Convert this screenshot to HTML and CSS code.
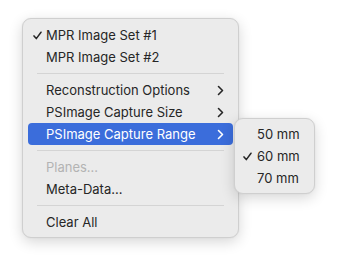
FILE: index.html
```html
<!DOCTYPE html>
<html>
<head>
<meta charset="utf-8">
<link rel="stylesheet" href="styles.css">
</head>
<body>
<div class="stage">
  <div class="menu main">
    <div class="item"><span class="check"><svg width="9" height="9" viewBox="0 0 9 9"><path d="M1 4.9 L3.3 7.6 L8 1.2" fill="none" stroke="#262626" stroke-width="1.5" stroke-linecap="round" stroke-linejoin="round"/></svg></span><span class="label">MPR Image Set #1</span></div>
    <div class="item"><span class="check"></span><span class="label">MPR Image Set #2</span></div>
    <div class="sep"></div>
    <div class="item"><span class="check"></span><span class="label">Reconstruction Options</span><span class="chev"><svg width="7" height="11" viewBox="0 0 7 11"><path d="M1.5 1.5 L5.5 5.5 L1.5 9.5" fill="none" stroke="#262626" stroke-width="1.6" stroke-linecap="round" stroke-linejoin="round"/></svg></span></div>
    <div class="item"><span class="check"></span><span class="label">PSImage Capture Size</span><span class="chev"><svg width="7" height="11" viewBox="0 0 7 11"><path d="M1.5 1.5 L5.5 5.5 L1.5 9.5" fill="none" stroke="#262626" stroke-width="1.6" stroke-linecap="round" stroke-linejoin="round"/></svg></span></div>
    <div class="item active"><span class="check"></span><span class="label">PSImage Capture Range</span><span class="chev"><svg width="7" height="11" viewBox="0 0 7 11"><path d="M1.5 1.5 L5.5 5.5 L1.5 9.5" fill="none" stroke="#ffffff" stroke-width="1.6" stroke-linecap="round" stroke-linejoin="round"/></svg></span></div>
    <div class="sep"></div>
    <div class="item disabled"><span class="check"></span><span class="label">Planes...</span></div>
    <div class="item"><span class="check"></span><span class="label">Meta-Data...</span></div>
    <div class="sep"></div>
    <div class="item"><span class="check"></span><span class="label">Clear All</span></div>
  </div>
  <div class="menu sub">
    <div class="item"><span class="check"></span><span class="label">50 mm</span></div>
    <div class="item"><span class="check"><svg width="9" height="9" viewBox="0 0 9 9"><path d="M1 4.9 L3.3 7.6 L8 1.2" fill="none" stroke="#262626" stroke-width="1.5" stroke-linecap="round" stroke-linejoin="round"/></svg></span><span class="label">60 mm</span></div>
    <div class="item"><span class="check"></span><span class="label">70 mm</span></div>
  </div>
</div>
</body>
</html>
```
FILE: styles.css
```css
html, body {
  margin: 0;
  padding: 0;
  background: #ffffff;
}
body {
  font-family: Inter, "Noto Sans", "Liberation Sans", sans-serif;
  font-size: 13px;
  color: #262626;
}
.stage {
  position: relative;
  width: 337px;
  height: 265px;
  padding: 18px 0 0 22px;
  box-sizing: border-box;
}
.menu {
  background: #ebebeb;
  border: 1px solid #cfcfcf;
  border-radius: 9px;
  box-shadow: 0 4px 14px rgba(0,0,0,0.16), 0 0 2px rgba(0,0,0,0.06);
  display: flex;
  flex-direction: column;
  box-sizing: border-box;
}
.main {
  width: 217px;
  padding: 5px 5px 4px 5px;
}
.sub {
  position: absolute;
  left: 234px;
  top: 118px;
  width: 81px;
  padding: 4px 5px;
}
.item {
  height: 22px;
  display: flex;
  align-items: center;
  border-radius: 4px;
  letter-spacing: 0;
}
.check {
  display: flex;
  align-items: center;
  justify-content: flex-start;
  box-sizing: border-box;
  flex: none;
}
.main .check {
  width: 18px;
  padding-left: 5px;
}
.sub .check {
  width: 17px;
  padding-left: 3px;
}
.label {
  flex: 1;
  white-space: nowrap;
}
.chev {
  width: 7px;
  margin-right: 9px;
  display: flex;
  align-items: center;
}
.active {
  background: #3b6ddb;
  color: #ffffff;
}
.disabled {
  color: #b3b3b3;
}
.sep {
  height: 1px;
  background: #d4d4d4;
  margin: 5px 9px 5px 9px;
}
```
